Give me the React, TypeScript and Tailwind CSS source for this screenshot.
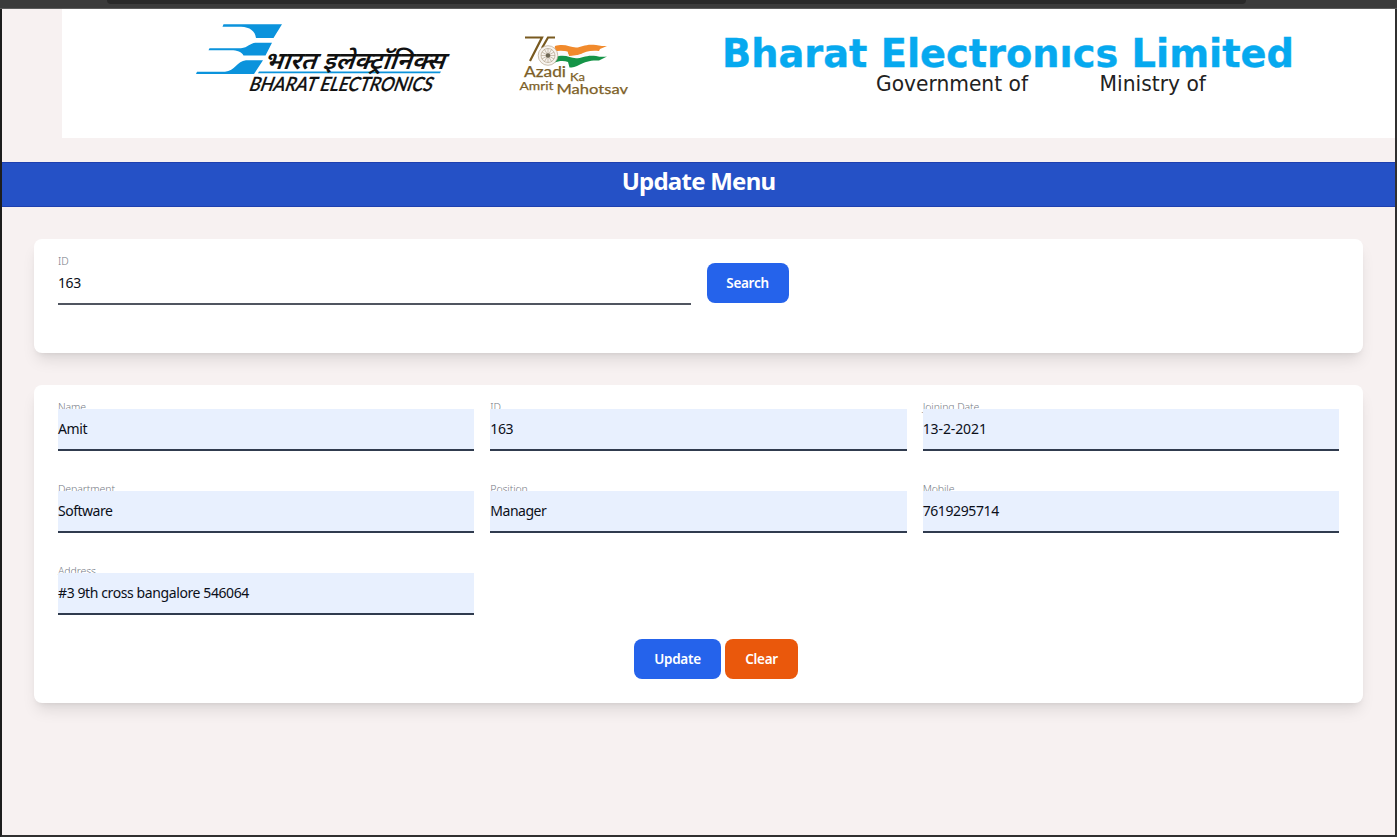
import React from "react";

const BODY = "font-['Noto_Sans','Open_Sans',sans-serif]";

function BharatLogo() {
  return (
    <svg width="270" height="90" viewBox="0 0 270 90" className="block shrink-0" aria-label="Bharat Electronics">
      <g fill="#0b93dc">
        <path d="M33.5 9.3H92L83.5 23H66C65 16 60 12 51 11.7H32.5Z" />
        <path d="M19.5 33.2H51C58 32.5 60 28 65.5 27.7H82L75.5 40.5H53.5C52 37 47 35.3 41 35.3H18.5Z" />
        <path d="M7 56.8H35C45 56 47 46 56 45.3H73L64 59H6Z" />
        <path d="M69 56.5H251L250 58.3H68Z" />
      </g>
      <text transform="translate(73 53.5) skewX(-20)" fontSize="24" fontWeight="600" fill="#111" textLength="181" lengthAdjust="spacingAndGlyphs" style={{ fontFamily: "'Noto Sans Devanagari','Noto Sans',sans-serif" }}>
        भारत इलेक्ट्रॉनिक्स
      </text>
      <text transform="translate(58 76) skewX(-19)" fontSize="19.5" fontWeight="600" fill="#111" stroke="#111" strokeWidth=".2" textLength="183" lengthAdjust="spacingAndGlyphs" style={{ fontFamily: "Lato,sans-serif" }}>
        BHARAT ELECTRONICS
      </text>
    </svg>
  );
}

function AzadiLogo() {
  const spokes = Array.from({ length: 12 }, (_, i) => i * 30);
  return (
    <svg width="130" height="80" viewBox="0 0 130 80" className="block shrink-0" aria-label="Azadi Ka Amrit Mahotsav">
      <path d="M45 21C54 18 60 22 66 22.5C72 22 76 18.5 86 20C90 21 94 21 97 21L90 24L89 26C80 25 75 27 70 29.5C66 31 62 31 59 31L57.5 26.5C52 25.5 48 25.5 44 27Z" fill="#f18a2c" />
      <path d="M47 27C50 26 55 26 57.5 27.5L59 31C68 31 75 27 88 27L87 31C77 29 72 33 66 33C60 32 54 29 47 31Z" fill="#fafafa" />
      <path d="M45 32.5C54 28.5 60 33 66 33.3C72 33 77 29.5 86 31C90 32 94 32 97 31.5L89 35.5C80 35 75 37 70 39.5C66 42 62 42.5 59.5 42.5L58 37C54 35.5 49 35.5 44 38Z" fill="#159447" />
      <g fill="none" stroke="#795a20" strokeWidth="2.2">
        <path d="M15 12.5H32L20 36" />
        <path d="M45 12.5H38L32 23" />
      </g>
      <circle cx="38" cy="30.5" r="9.8" fill="#f7f3ee" stroke="#b5a58f" strokeWidth=".7" />
      <circle cx="38" cy="30.5" r="7" fill="none" stroke="#b5a58f" strokeWidth=".7" />
      <g stroke="#b0a08a" strokeWidth=".6">
        {spokes.map((a) => (
          <path key={a} d="M38 30.5V23.5" transform={`rotate(${a} 38 30.5)`} />
        ))}
      </g>
      <circle cx="38" cy="30.5" r="2.2" fill="#6d6654" />
      <g fill="#7d5f28" stroke="#7d5f28" strokeWidth=".25" style={{ fontFamily: "Lato,sans-serif" }}>
        <text x="14" y="52" fontSize="14.5" textLength="42" lengthAdjust="spacingAndGlyphs">Azadi</text>
        <text x="60" y="55.5" fontSize="12" textLength="15" lengthAdjust="spacingAndGlyphs">Ka</text>
        <text x="9.5" y="65" fontSize="12" textLength="34" lengthAdjust="spacingAndGlyphs">Amrit</text>
        <text x="46.5" y="69" fontSize="14" textLength="71.5" lengthAdjust="spacingAndGlyphs">Mahotsav</text>
      </g>
    </svg>
  );
}

function CompanyName() {
  return (
    <svg width="600" height="80" viewBox="0 0 600 80" className="block shrink-0" style={{ fontFamily: "'DejaVu Sans',sans-serif" }}>
      <text x="12" y="41.5" fontSize="38.5" fontWeight="700" fill="#06a9ef" stroke="#06a9ef" strokeWidth=".4" textLength="572" lengthAdjust="spacingAndGlyphs">
        Bharat Electronıcs Limited
      </text>
      <g fontSize="20.5" fill="#222">
        <text x="166" y="65.5" textLength="152" lengthAdjust="spacingAndGlyphs">Government of</text>
        <text x="389.5" y="65.5" textLength="106.5" lengthAdjust="spacingAndGlyphs">Ministry of</text>
      </g>
    </svg>
  );
}

function Field({ label, value, filled = false, tracking = "tracking-[-0.4px]" }: { label: string; value: string; filled?: boolean; tracking?: string }) {
  return (
    <div className="relative mb-6 h-[42px]">
      <label className="absolute -top-[10px] left-0 text-[10.5px] leading-4 font-light tracking-[-0.1px] text-[#757b86]">{label}</label>
      <div
        className={`relative flex h-full items-center border-b-2 text-[14px] leading-5 text-[#0b0f19] ${tracking} ${
          filled ? "border-[#303b4e] bg-[#e8f0fe]" : "border-[#505560]"
        }`}
      >
        {value}
      </div>
    </div>
  );
}

function Button({ children, className }: { children: React.ReactNode; className: string }) {
  return (
    <button className={`flex h-10 items-center justify-center rounded-lg text-[13.5px] leading-5 font-semibold tracking-[-0.3px] text-white ${className}`}>
      {children}
    </button>
  );
}

const fields = [
  { label: "Name", value: "Amit" },
  { label: "ID", value: "163" },
  { label: "Joining Date", value: "13-2-2021", tracking: "tracking-[-0.1px]" },
  { label: "Department", value: "Software", tracking: "tracking-[-0.5px]" },
  { label: "Position", value: "Manager", tracking: "tracking-[-0.5px]" },
  { label: "Mobile", value: "7619295714" },
  { label: "Address", value: "#3 9th cross bangalore 546064" },
];

export default function App() {
  return (
    <div className={`flex h-[837px] w-[1397px] flex-col overflow-hidden bg-[#3b3b3b] ${BODY}`}>
      <div className="h-[9px] shrink-0 border-b border-[#5c5c5c] bg-[#3b3b3b]">
        <div className="ml-[107px] h-1 w-[1139px] rounded-b-lg bg-[#292929]" />
      </div>
      <div className="flex min-h-0 flex-1 flex-col border-r-2 border-b-2 border-l-2 border-r-[#303030] border-b-[#303030] border-l-[#1d1d1d] bg-[#f7f1f1]">
        <header className="ml-[60px] flex h-[129px] shrink-0 items-start bg-white pl-32 pt-1.5">
          <BharatLogo />
          <div className="ml-[50px] pt-2.5">
            <AzadiLogo />
          </div>
          <div className="ml-[70px] pt-2.5">
            <CompanyName />
          </div>
        </header>

        <div className="mt-6 flex h-[45px] shrink-0 justify-center border-y border-[#1e40af] bg-[#2551c6]">
          <h1 className="pt-[2px] text-[24px] leading-8 font-bold tracking-[-0.75px] text-white">Update Menu</h1>
        </div>

        <main className="flex flex-col gap-8 px-8 pt-8">
          <section className="grid h-[114px] grid-cols-2 gap-4 rounded-lg bg-white p-6 shadow-lg">
            <Field label="ID" value="163" />
            <Button className="w-[82px] bg-[#2563eb]">Search</Button>
          </section>

          <section className="h-[318px] rounded-lg bg-white p-6 shadow-lg">
            <div className="grid grid-cols-3 gap-x-4 gap-y-4">
              {fields.map((f) => (
                <Field key={f.label} filled label={f.label} value={f.value} tracking={f.tracking} />
              ))}
            </div>
            <div className="flex gap-1 pl-[576px]">
              <Button className="w-[87px] bg-[#2563eb]">Update</Button>
              <Button className="w-[73px] bg-[#ea580c]">Clear</Button>
            </div>
          </section>
        </main>
      </div>
    </div>
  );
}
